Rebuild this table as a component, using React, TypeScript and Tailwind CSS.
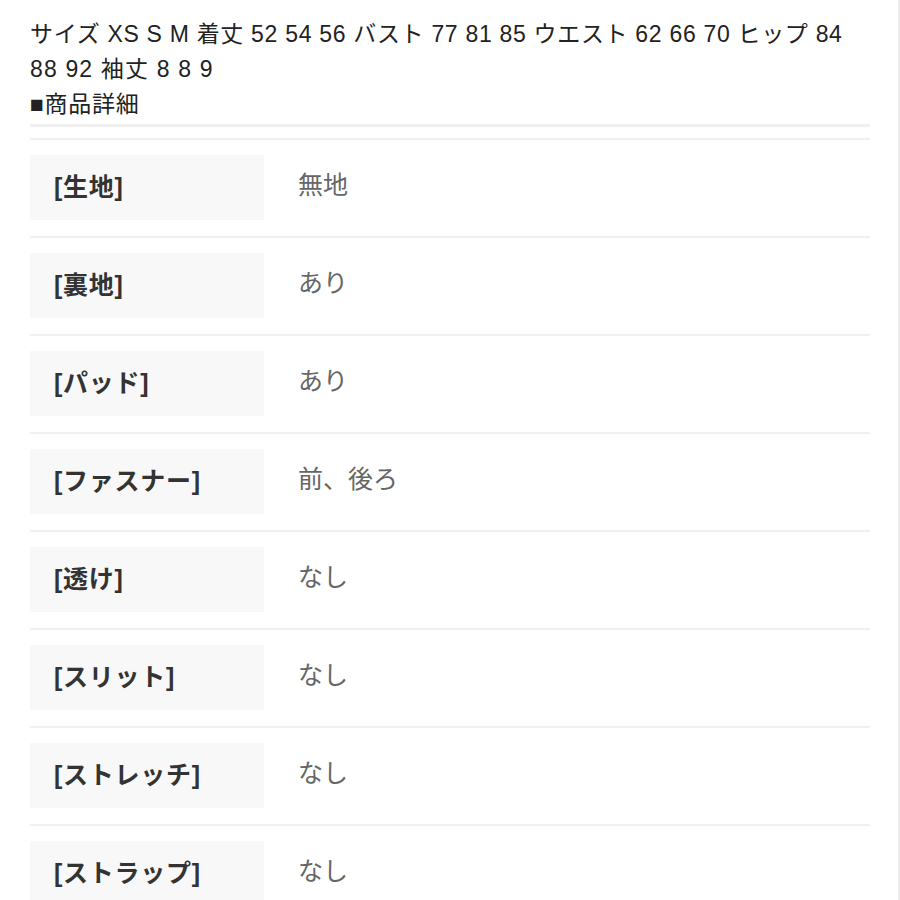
import React from "react";

const rows: [string, string][] = [
  ["[生地]", "無地"],
  ["[裏地]", "あり"],
  ["[パッド]", "あり"],
  ["[ファスナー]", "前、後ろ"],
  ["[透け]", "なし"],
  ["[スリット]", "なし"],
  ["[ストレッチ]", "なし"],
  ["[ストラップ]", "なし"],
];

export default function App() {
  return (
    <div
      className="w-[900px] h-[900px] overflow-hidden bg-white border-r-2 border-[#eeeeee]"
      style={{ fontFamily: '"Liberation Sans", "Noto Sans CJK JP", sans-serif' }}
    >
      <div className="pl-[30px] pr-[28px]">
        <div className="pt-[17px] text-[23px] leading-[35px] tracking-[0.03em] text-[#222]">
          <p>サイズ XS S M 着丈 52 54 56 バスト 77 81 85 ウエスト 62 66 70 ヒップ 84</p>
          <p className="tracking-[0.05em]">88 92 袖丈 8 8 9</p>
          <p>■商品詳細</p>
        </div>
        <div className="mt-[2px] border-t-[3px] border-[#f0f0f0] h-[14px]" />
        <div className="border-t-2 border-[#f0f0f0]">
          {rows.map(([k, v]) => (
            <div key={k} className="flex items-center pt-[15px] pb-[16px] border-b-2 border-[#f0f0f0]">
              <div className="w-[234px] h-[65px] bg-[#f8f8f8] flex items-center pl-[24px] text-[25px] font-bold tracking-[0.03em] text-[#333]">
                {k}
              </div>
              <div className="pl-[34px] text-[25px] text-[#666] pb-[3px]">{v}</div>
            </div>
          ))}
        </div>
      </div>
    </div>
  );
}
